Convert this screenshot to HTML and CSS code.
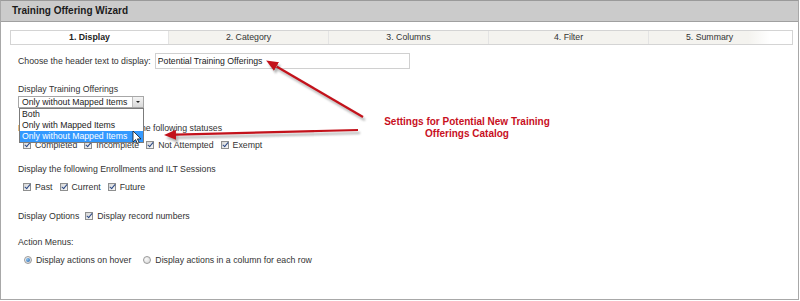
FILE: index.html
```html
<!DOCTYPE html>
<html lang="en">
<head>
    <meta charset="UTF-8">
    <title>Training Offering Wizard</title>
    <link rel="stylesheet" href="styles.css">
</head>
<body>
    <div class="wizard">
        <div class="wizard-header">Training Offering Wizard</div>

        <!-- Steps -->
        <div class="steps">
            <div class="step active">1. Display</div>
            <div class="step">2. Category</div>
            <div class="step">3. Columns</div>
            <div class="step">4. Filter</div>
            <div class="step last">5. Summary</div>
        </div>

        <div class="form">
            <div class="header-row">
                <label>Choose the header text to display:</label>
                <input type="text" class="text-box" value="Potential Training Offerings">
            </div>

            <div class="field-label first">Display Training Offerings</div>
            <div class="select-wrap">
                <div class="select">
                    <span class="select-value">Only without Mapped Items</span>
                    <span class="select-btn"></span>
                </div>
                <ul class="options">
                    <li>Both</li>
                    <li>Only with Mapped Items</li>
                    <li class="selected">Only without Mapped Items</li>
                </ul>
            </div>

            <div class="field-label gap-lg">Display Training Offerings with the following statuses</div>
            <div class="checks tight">
                <span class="check on"></span><span class="check-text">Completed</span>
                <span class="check on"></span><span class="check-text">Incomplete</span>
                <span class="check on"></span><span class="check-text">Not Attempted</span>
                <span class="check on"></span><span class="check-text">Exempt</span>
            </div>

            <div class="field-label">Display the following Enrollments and ILT Sessions</div>
            <div class="checks">
                <span class="check on"></span><span class="check-text">Past</span>
                <span class="check on"></span><span class="check-text">Current</span>
                <span class="check on"></span><span class="check-text">Future</span>
            </div>

            <div class="checks options-row">
                <span class="inline-label">Display Options</span>
                <span class="check on"></span><span class="check-text">Display record numbers</span>
            </div>

            <div class="field-label gap-lg">Action Menus:</div>
            <div class="checks">
                <span class="radio on"></span><span class="check-text radio-text">Display actions on hover</span>
                <span class="radio"></span><span class="check-text">Display actions in a column for each row</span>
            </div>
        </div>

        <!-- Annotation -->
        <div class="callout">Settings for Potential New Training<br>Offerings Catalog</div>
        <svg class="overlay" width="800" height="301" viewBox="0 0 800 301">
            <defs>
                <marker id="head" markerWidth="12" markerHeight="10" refX="0" refY="5" orient="auto" markerUnits="userSpaceOnUse">
                    <path d="M0 0 L12 5 L0 10 Z" fill="#c3121b"/>
                </marker>
                <marker id="head-shadow" markerWidth="12" markerHeight="10" refX="0" refY="5" orient="auto" markerUnits="userSpaceOnUse">
                    <path d="M0 0 L12 5 L0 10 Z" fill="#777"/>
                </marker>
                <filter id="soft" x="-20%" y="-20%" width="140%" height="140%">
                    <feGaussianBlur stdDeviation="1.3"/>
                </filter>
            </defs>
            <g filter="url(#soft)" opacity="0.55" stroke="#777" stroke-width="2.2" transform="translate(2 3)">
                <line x1="363" y1="117" x2="276.5" y2="66.5" marker-end="url(#head-shadow)"/>
                <line x1="358" y1="130" x2="176" y2="134.7" marker-end="url(#head-shadow)"/>
            </g>
            <g stroke="#c3121b" stroke-width="2.2">
                <line x1="363" y1="117" x2="276.5" y2="66.5" marker-end="url(#head)"/>
                <line x1="358" y1="130" x2="176" y2="134.7" marker-end="url(#head)"/>
            </g>
            <!-- mouse pointer -->
            <path d="M133 131 L133 142 L135.6 139.6 L137.4 143.4 L139.2 142.6 L137.4 138.9 L141 138.9 Z" fill="#fff" stroke="#111" stroke-width="0.8" stroke-linejoin="round"/>
        </svg>
    </div>
</body>
</html>
```

FILE: styles.css
```css
body {
    margin: 0;
    background-color: #fff;
    color: #333;
    font-family: "Liberation Sans", Arial, sans-serif;
    font-size: 8.75px;
}

.wizard {
    position: relative;
    width: 799px;
    height: 300px;
    box-sizing: border-box;
    border: 1px solid #a8a8a8;
    border-top-color: #9a9a9a;
}

.wizard-header {
    height: 20px;
    line-height: 20px;
    padding-left: 11px;
    background-color: #cbcbcb;
    border-bottom: 1px solid #a0a0a0;
    font-size: 10px;
    font-weight: bold;
    color: #1b1b1b;
}

.steps {
    display: flex;
    height: 15px;
    margin: 8px 5px 0 9px;
    box-sizing: border-box;
    border: 1px solid #d4d4d4;
}

.step {
    width: 160px;
    line-height: 13px;
    text-align: center;
    background-color: #f4f3ef;
    border-left: 1px solid #e4e4e4;
    box-sizing: border-box;
    color: #333;
}

.step.active {
    width: 157px;
    border-left: 0;
    background-color: #fff;
    font-weight: bold;
    color: #222;
}

.step.last {
    width: 122px;
    background: linear-gradient(to right, #f4f3ef 82%, #fff);
}

.form {
    padding: 8px 0 0 17px;
}

.header-row {
    display: flex;
    align-items: center;
    height: 16px;
    gap: 4px;
}

.text-box {
    width: 255px;
    height: 16px;
    margin: 0;
    padding: 0 2px;
    box-sizing: border-box;
    border: 1px solid #d0d0d0;
    font-family: "Liberation Sans", Arial, sans-serif;
    font-size: 8.7px;
    color: #222;
    outline: none;
}

.field-label {
    margin-top: 12px;
    line-height: 12px;
}

.field-label.first {
    margin-top: 14px;
}

.field-label.gap-lg {
    margin-top: 14px;
}

.select-wrap {
    position: relative;
    width: 126px;
    margin-top: 1px;
}

.select {
    display: flex;
    height: 12px;
    box-sizing: border-box;
    border: 1px solid #a7a7a7;
    font-size: 8.7px;
    color: #222;
}

.select-value {
    flex: 1;
    padding-left: 3px;
    line-height: 10px;
}

.select-btn {
    position: relative;
    width: 10px;
    border-left: 1px solid #bdbdbd;
    background: linear-gradient(#f4f4f4, #d9d9d9);
}

.select-btn::after {
    content: "";
    position: absolute;
    left: 3px;
    top: 4px;
    border-left: 2px solid transparent;
    border-right: 2px solid transparent;
    border-top: 2px solid #222;
}

.options {
    position: absolute;
    top: 12px;
    left: 1px;
    width: 125px;
    margin: 0;
    padding: 0;
    list-style: none;
    box-sizing: border-box;
    border: 1px solid #7b7b7b;
    background-color: #fff;
    font-size: 8.7px;
    color: #222;
    z-index: 2;
}

.options li {
    height: 11px;
    line-height: 11px;
    padding-left: 2px;
}

.options li.selected {
    background-color: #3399ff;
    color: #fff;
}

.checks {
    display: flex;
    align-items: center;
    height: 12px;
    margin-top: 6px;
}

.checks.tight {
    margin-top: 5px;
}

.check {
    width: 8px;
    height: 8px;
    margin: 0 4px 0 5px;
    position: relative;
    box-sizing: border-box;
    border: 1px solid #8e8f8f;
    background: linear-gradient(135deg, #d6d6d6, #f8f8f8);
}

.check.on::after {
    content: "";
    position: absolute;
    left: 2px;
    top: -1px;
    width: 2px;
    height: 5px;
    border-right: 1.4px solid #2c4a86;
    border-bottom: 1.4px solid #2c4a86;
    transform: rotate(40deg);
}

.check-text {
    margin-right: 2px;
}

.options-row {
    margin-top: 17px;
}

.inline-label {
    margin-right: 1px;
}

.radio {
    width: 8px;
    height: 8px;
    margin: 0 4px 0 6px;
    position: relative;
    box-sizing: border-box;
    border: 1px solid #9a9a9a;
    border-radius: 50%;
    background: radial-gradient(circle at 35% 35%, #fafafa, #d4d4d4);
}

.radio.on::after {
    content: "";
    position: absolute;
    left: 1px;
    top: 1px;
    width: 4px;
    height: 4px;
    border-radius: 50%;
    background: radial-gradient(circle at 35% 35%, #8cc3f0, #1f5fa8);
}

.radio-text {
    margin-right: 6px;
}

.callout {
    position: absolute;
    left: 366px;
    top: 115px;
    width: 200px;
    line-height: 12px;
    text-align: center;
    font-size: 10px;
    font-weight: bold;
    color: #c8101e;
}

.overlay {
    position: absolute;
    top: -1px;
    left: -1px;
    pointer-events: none;
    z-index: 3;
}
```
